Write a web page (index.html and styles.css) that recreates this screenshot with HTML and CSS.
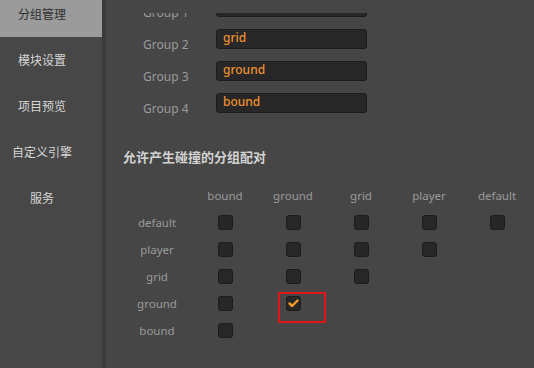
FILE: index.html
```html
<!DOCTYPE html>
<html lang="zh-cn">
<head>
	<meta charset="UTF-8" />
	<title>碰撞分组</title>
	<link rel="stylesheet" href="styles.css">
</head>
<body>
	<div class="app">
		<ul class="sideNav">
			<li class="active">分组管理</li>
			<li>模块设置</li>
			<li>项目预览</li>
			<li>自定义引擎</li>
			<li>服务</li>
		</ul>
		<div class="main">
			<div class="scrollArea">
				<div class="groupList">
					<div class="groupRow"><label>Group 1</label><input type="text" value="player" /></div>
					<div class="groupRow"><label>Group 2</label><input type="text" value="grid" /></div>
					<div class="groupRow"><label>Group 3</label><input type="text" value="ground" /></div>
					<div class="groupRow"><label>Group 4</label><input type="text" value="bound" /></div>
				</div>
				<h3 class="title">允许产生碰撞的分组配对</h3>
				<div class="matrix">
					<span></span>
					<span>bound</span>
					<span>ground</span>
					<span>grid</span>
					<span>player</span>
					<span>default</span>

					<span>default</span>
					<span class="cell"><i class="box"></i></span>
					<span class="cell"><i class="box"></i></span>
					<span class="cell"><i class="box"></i></span>
					<span class="cell"><i class="box"></i></span>
					<span class="cell"><i class="box"></i></span>

					<span>player</span>
					<span class="cell"><i class="box"></i></span>
					<span class="cell"><i class="box"></i></span>
					<span class="cell"><i class="box"></i></span>
					<span class="cell"><i class="box"></i></span>
					<span></span>

					<span>grid</span>
					<span class="cell"><i class="box"></i></span>
					<span class="cell"><i class="box"></i></span>
					<span class="cell"><i class="box"></i></span>
					<span></span><span></span>

					<span>ground</span>
					<span class="cell"><i class="box"></i></span>
					<span class="cell"><i class="box"><svg width="11" height="9" viewBox="0 0 11 9"><path d="M1.5 4.5 L4.2 7 L9.5 1.5" fill="none" stroke="#f39a2b" stroke-width="2.4" stroke-linecap="round" stroke-linejoin="round"/></svg></i><b class="mark"></b></span>
					<span></span><span></span><span></span>

					<span>bound</span>
					<span class="cell"><i class="box"></i></span>
					<span></span><span></span><span></span><span></span>
				</div>
			</div>
		</div>
	</div>
</body>
</html>
```
FILE: styles.css
```css
*{
	margin: 0;padding: 0;
	box-sizing: border-box;
}
body{
	background: #464646;
	font-family: "Noto Sans", "Noto Sans CJK SC", sans-serif;
	overflow: hidden;
}
.app{
	display: flex;
	height: 368px;
}
.sideNav{
	width: 106px;
	flex: none;
	background: #474747;
	border-right: 4px solid #3b3b3b;
	list-style-type: none;
	margin-top: -9px;
	font-size: 12px;
}
.sideNav li{
	height: 46px;line-height: 47px;
	padding-right: 18px;
	text-align: center;
	color: #d6d6d6;
}
.sideNav li.active{
	background: #9b9b9b;
	color: #2e2e2e;
}
.main{
	flex: 1;
	padding-top: 13px;
	padding-left: 17px;
	display: flex;
	flex-direction: column;
}
.scrollArea{
	flex: 1;
	overflow: hidden;
}
.groupList{
	margin-top: -22px;
	padding-left: 20px;
}
.groupRow{
	display: flex;
	align-items: center;
	height: 32px;
}
.groupRow label{
	width: 73px;
	padding-top: 11px;
	font-size: 12px;
	color: #9a9a9a;
}
.groupRow input{
	width: 151px;height: 20px;
	background: #272727;
	border: 1px solid #1c1c1c;
	border-radius: 3px;
	padding: 0 0 3px 6px;
	color: #ee9030;
	font-family: inherit;
	font-size: 12px;
	font-weight: 500;
	outline: none;
}
.title{
	margin-top: 28px;
	font-size: 13px;
	font-weight: bold;
	color: #d2d2d2;
	line-height: 20px;
}
.matrix{
	display: grid;
	grid-template-columns: repeat(6, 68px);
	grid-auto-rows: 27px;
	margin-top: 15px;
	font-size: 11.5px;
	color: #9a9a9a;
}
.matrix span{
	display: flex;
	align-items: center;
	justify-content: center;
}
.cell{
	position: relative;
}
.box{
	display: flex;
	align-items: center;
	justify-content: center;
	width: 15px;height: 15px;
	background: #272727;
	border: 1px solid #1b1b1b;
	border-radius: 3px;
	margin-left: 1px;
}
.mark{
	position: absolute;
	left: 19px;top: 2px;
	width: 48px;height: 31px;
	border: 2px solid #e01616;
}
```
